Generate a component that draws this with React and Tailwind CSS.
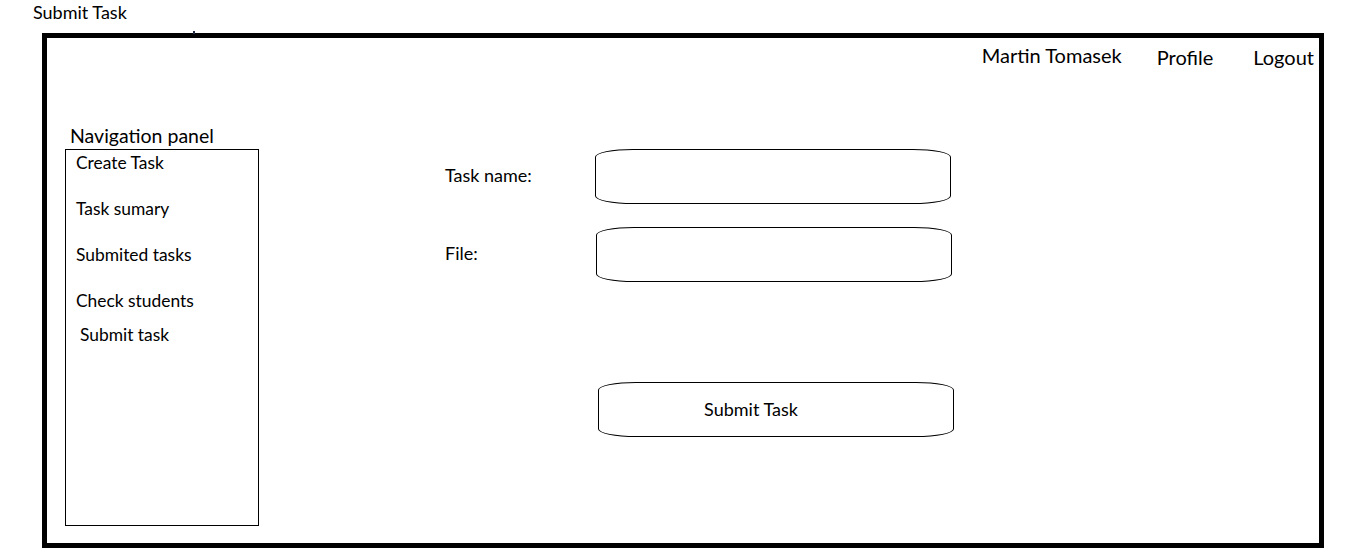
const navItems = ['Create Task', 'Task sumary', 'Submited tasks', 'Check students'];

function Field({ label, boxClass = '', className = '' }) {
  return (
    <div className={`flex items-center ${className}`}>
      <label className="w-[150px] -mt-[3px] text-[18px] leading-[24px]">{label}</label>
      <div className={`w-[356px] h-[55px] border border-black rounded-[38px/8px] ${boxClass}`} />
    </div>
  );
}

export default function App() {
  return (
    <div className="min-h-screen bg-white text-black font-['Lato','Open_Sans',sans-serif]">
      <div className="h-[33px] pl-[33px] pt-[1px] text-[18px] leading-[22px]">Submit Task</div>

      <div className="relative ml-[42px] w-[1282px] h-[515px] border-[5px] border-black">
        {/* stray pencil mark on the frame */}
        <span className="absolute left-[146px] -top-[7px] w-[2px] h-[3px] bg-[#1f2a44]" />

        <header className="flex justify-end pr-[5px] pt-[5px] text-[20px] leading-[24px]">
          <span>Martin Tomasek</span>
          <span className="ml-[35px] mt-[2px]">Profile</span>
          <span className="ml-[40px] mt-[2px]">Logout</span>
        </header>

        <div className="flex mt-[58px]">
          <aside className="ml-[18px] w-[194px]">
            <h2 className="h-[22px] pl-[5px] text-[19.5px] leading-[18px]">Navigation panel</h2>
            <nav className="h-[377px] border border-black pl-[10px] pt-[1px] text-[17.4px]">
              {navItems.map(item => (
                <div key={item} className="h-[46px] leading-[24px]">{item}</div>
              ))}
              <div className="-mt-[12px] pl-[4px] leading-[24px]">Submit task</div>
            </nav>
          </aside>

          <main className="ml-[186px] mt-[22px]">
            <Field label="Task name:" />
            <Field label="File:" boxClass="ml-[1px]" className="mt-[23px]" />
            <button className="mt-[100px] ml-[153px] w-[356px] h-[55px] border border-black rounded-[38px/8px] text-[18px] pr-[50px]">
              Submit Task
            </button>
          </main>
        </div>
      </div>
    </div>
  );
}
